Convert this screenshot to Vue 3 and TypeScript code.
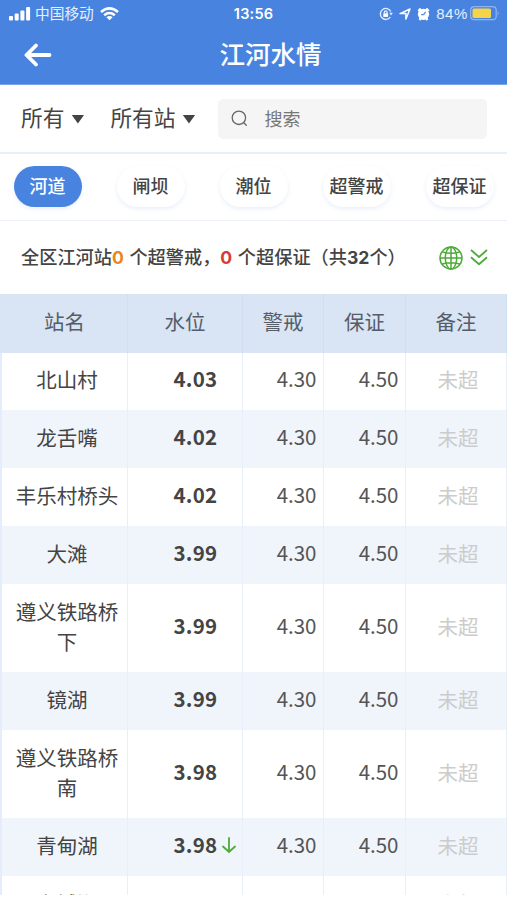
<script setup lang="ts">
interface Station {
  name: string
  level: string
  falling?: boolean
}

const filters: string[] = ['河道', '闸坝', '潮位', '超警戒', '超保证']
const columns: string[] = ['站名', '水位', '警戒', '保证', '备注']
const stations: Station[] = [
  { name: '北山村', level: '4.03' },
  { name: '龙舌嘴', level: '4.02' },
  { name: '丰乐村桥头', level: '4.02' },
  { name: '大滩', level: '3.99' },
  { name: '遵义铁路桥下', level: '3.99' },
  { name: '镜湖', level: '3.99' },
  { name: '遵义铁路桥南', level: '3.98' },
  { name: '青甸湖', level: '3.98', falling: true },
  { name: '安城湖', level: '3.97' },
]
</script>

<template>
  <main class="screen">
    <header class="top">
      <div class="status">
        <div class="side">
          <svg class="signal" width="22" height="14" viewBox="0 0 22 14" fill="#fff">
            <rect x="0" y="9" width="4" height="4.5" rx="1" /><rect x="5.7" y="6.5" width="4" height="7" rx="1" />
            <rect x="11.4" y="3.5" width="4" height="10" rx="1" /><rect x="17.1" y="0" width="4" height="13.5" rx="1" />
          </svg>
          <span class="carrier">中国移动</span>
          <svg width="19" height="14" viewBox="0 0 19 14" fill="none" stroke="#fff" stroke-width="2.5">
            <path d="M1 5Q9.500-2.200 18 5M4.200 8.200Q9.500 3.900 14.800 8.200" /><path d="M6.400 10.200Q9.500 7.900 12.600 10.200L9.500 13.300Z" fill="#fff" stroke="none" />
          </svg>
        </div>
        <strong class="time">13:56</strong>
        <div class="side right">
          <svg width="14" height="14" viewBox="0 0 14 14" fill="none" stroke="#e3eeff" stroke-width="1.400">
            <path d="M11.800 4.500A5.500 5.500 0 1 0 11.300 10.200" /><path d="M10.300 5.800h3.500L12 8.500z" fill="#e3eeff" stroke="none" /><rect x="4.300" y="6.300" width="4.800" height="3.600" fill="#fff" stroke="none" /><path d="M5.400 6.500V5.200a1.300 1.300 0 0 1 2.600 0v1.300" />
          </svg>
          <svg width="12" height="12" viewBox="0 0 12 12" fill="none" stroke="#fff" stroke-width="1.500" stroke-linejoin="round"><path d="M1 5.600L11 1L6.900 11V5.600Z" /></svg>
          <svg width="13" height="14" viewBox="0 0 12 14"><circle cx="6" cy="7.300" r="5.600" fill="#fff" /><path d="M.8 4L3.300 1.500M11.200 4L8.700 1.500M2 13l1.500-2M10 13L8.500 11" stroke="#fff" stroke-width="2.200" /><path d="M6.100 7.600L8.200 4.800M6.100 7.600H3.700" stroke="#4884df" stroke-width="1.100" fill="none" /></svg>
          <span class="percent">84%</span>
          <svg width="30" height="15" viewBox="0 0 30 15"><rect x=".7" y=".7" width="25.500" height="13" rx="3.500" fill="none" stroke="#8eb5f2" stroke-width="1.200" /><rect x="2.500" y="2.500" width="18.500" height="9.500" rx="1.500" fill="#f5d547" /><path d="M27.700 5v4.500q2-2.200 0-4.500" fill="#8eb5f2" /></svg>
        </div>
      </div>
      <div class="titlebar">
        <svg class="back" width="28" height="24" viewBox="0 0 28 24" fill="none" stroke="#fff" stroke-width="3.800" stroke-linecap="round" stroke-linejoin="round"><path d="M25.500 12H3M12 2.500L2.500 12L12 21.500" /></svg>
        <h1>江河水情</h1>
      </div>
    </header>

    <section class="search-row">
      <button class="select">所有<i class="caret" /></button>
      <button class="select">所有站<i class="caret" /></button>
      <div class="search">
        <svg width="17" height="17" viewBox="0 0 17 17" fill="none" stroke="#666" stroke-width="1.300" stroke-linecap="round"><circle cx="7.900" cy="7.800" r="6.700" /><path d="M12.800 12.700L15.300 15.200" /></svg>
        <span>搜索</span>
      </div>
    </section>

    <nav class="filters">
      <button v-for="(item, index) in filters" :key="item" class="pill" :class="{ active: index === 0 }">{{ item }}</button>
    </nav>

    <section class="summary">
      <p>全区江河站<b class="orange">0</b> 个超警戒，<b class="red">0</b> 个超保证（共<b>32</b>个）</p>
      <svg class="globe" width="24" height="24" viewBox="0 0 24 24" fill="none" stroke="#4dab38" stroke-width="1.500"><circle cx="12" cy="12" r="11" /><ellipse cx="12" cy="12" rx="5.700" ry="11" /><path d="M12 1v22M1 12h22M3.300 6Q12 8.500 20.700 6M3.300 18Q12 15.500 20.700 18" /></svg>
      <svg class="expand" width="18" height="17" viewBox="0 0 18 17" fill="none" stroke="#4dab38" stroke-width="1.800"><path d="M1 1L9 8L17 1M1 8.300L9 15.300L17 8.300" /></svg>
    </section>

    <section class="table">
      <div class="row head"><div v-for="column in columns" :key="column" class="cell">{{ column }}</div></div>
      <div v-for="station in stations" :key="station.name" class="row">
        <div class="cell name">{{ station.name }}</div>
        <div class="cell level">
          <span>{{ station.level }}</span>
          <svg v-if="station.falling" width="14" height="17" viewBox="0 0 14 17" fill="none" stroke="#4dab38" stroke-width="1.800" stroke-linecap="round"><path d="M7 1V15M1 9.500L7 15L13 9.500" /></svg>
        </div>
        <div class="cell number">4.30</div>
        <div class="cell number">4.50</div>
        <div class="cell note">未超</div>
      </div>
    </section>
  </main>
</template>

<style>
body { margin: 0; background: #fff; }
</style>

<style scoped>
* { box-sizing: border-box; }
.screen { width: 507px; height: 895px; overflow: hidden; display: flex; flex-direction: column; background: #fff; color: #444; font-family: "Noto Sans CJK SC", sans-serif; }
button { border: 0; padding: 0; background: none; font: inherit; color: inherit; }
svg { display: block; flex: none; }
.top { height: 85px; flex: none; background: #4884df; color: #fff; border-bottom: 1px solid #78a6eb; }
.status { height: 27px; display: grid; grid-template-columns: 1fr 60px 1fr; align-items: center; padding: 0 7px 0 9px; }
.side { display: flex; align-items: center; }
.carrier { margin: -1px 6px 0 4px; font-size: 14.700px; line-height: 20px; color: #e5efff; }
.time { font: 600 14.500px/20px Inter, sans-serif; text-align: center; margin-left: -2px; letter-spacing: .2px; }
.right { justify-content: flex-end; }
.right svg + svg { margin-left: 6px; }
.percent { margin: 0 2px 0 6px; font: 15px/20px "Liberation Sans", sans-serif; letter-spacing: .6px; color: #e5efff; }
.titlebar { display: grid; grid-template-columns: 70px 1fr 36px; height: 56px; align-items: center; }
.back { margin-left: 23.500px; }
h1 { margin: -5px 0 0; font-size: 25.500px; line-height: 36px; font-weight: 500; text-align: center; }
.search-row { height: 69px; flex: none; display: flex; align-items: center; padding: 0 20px 0 21px; border-bottom: 2px solid #e6effb; }
.select { display: flex; align-items: center; font-size: 21.700px; line-height: 32px; margin: -3px 26px 0 0; }
.caret { width: 13px; height: 9px; margin: 4px 0 0 7px; background: #444; clip-path: polygon(0 0, 100% 0, 50% 100%); }
.search { flex: 1; height: 40px; display: flex; align-items: center; gap: 17px; padding-left: 13px; margin-left: -3px; border-radius: 5px; background: #f5f5f5; color: #777; font-size: 18px; }
.search span { margin: -2px 0 0 -1px; }
.filters { height: 67px; flex: none; display: flex; justify-content: space-between; align-items: center; padding: 0 13px 2px 14px; border-bottom: 1px solid #edf1f7; }
.pill { width: 68px; height: 41px; padding: 0 1px 2px 0; border-radius: 21px; font-size: 18px; font-weight: 500; white-space: nowrap; display: flex; justify-content: center; align-items: center; box-shadow: 0 2px 4px #dce5f5a0; }
.active { background: #4884df; color: #fff; }
.summary { height: 73px; flex: none; display: flex; align-items: center; padding: 0 19px 0 21px; }
.summary p { margin: -4px 0 0; font-size: 18.200px; font-weight: 500; white-space: nowrap; word-spacing: 1.500px; }
.summary b { font: 700 17.600px/20px Inter, "Noto Sans CJK SC", sans-serif; }
.summary .orange { color: #e8861f; }
.summary .red { color: #d63c36; }
.globe { margin-left: auto; }
.expand { margin-left: 7px; }
.table { flex: none; font-size: 20.500px; line-height: 30px; border-left: 2px solid #e5ecfb; }
.row { display: grid; grid-template-columns: 126px 115px 81px 82px 101px; background: #fff; }
.row:nth-child(odd):not(.head) { background: #f0f4fb; }
.row.head { min-height: 58.500px; background: #d9e4f4; margin-left: -2px; padding-left: 2px; color: #555d68; }
.cell { display: flex; align-items: center; justify-content: center; padding: 11.500px 10px 16.450px; border-right: 1px solid #e9eff8; }
.head .cell { padding-top: 12px; padding-bottom: 16.500px; border-color: #cfdef1; }
.cell.name { text-align: center; padding-left: 12px; padding-right: 7px; }
.cell.level { justify-content: flex-start; padding: 10.800px 0 17.150px 45.500px; font-weight: 700; letter-spacing: .2px; }
.level svg { margin: 4px 0 0 5px; }
.cell.number { justify-content: flex-end; padding: 10.800px 6.500px 17.150px 0; color: #555; }
.cell.note { padding-left: 14px; color: #ccc; }
.row:last-child { background: #fff; }
.row:last-child .cell { padding-top: 12px; padding-bottom: 16px; }
</style>
